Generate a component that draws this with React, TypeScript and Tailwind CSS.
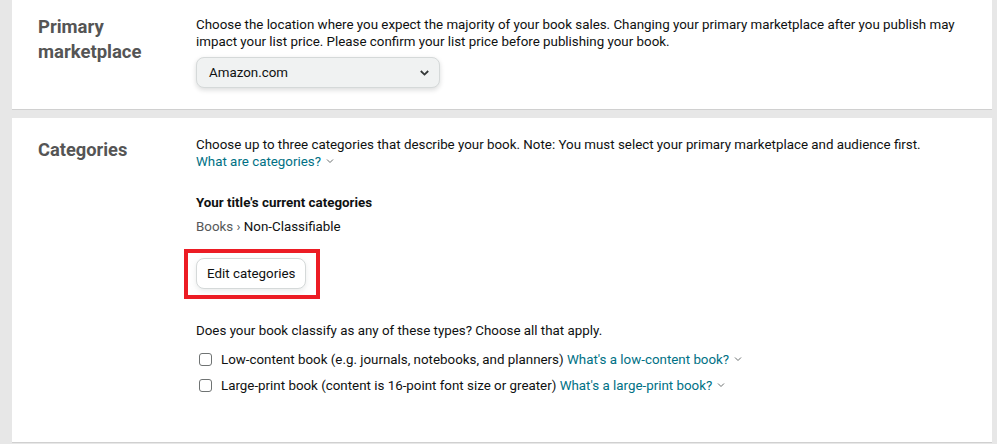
import React from 'react';

const font = { fontFamily: 'Roboto, "Liberation Sans", sans-serif' };

const LinkChevron: React.FC = () => (
    <svg width="8" height="6" viewBox="0 0 8 6" className="inline-block ml-[5px] mb-[2px]">
        <path d="M1 1.5 L4 4.5 L7 1.5" fill="none" stroke="#6b7070" strokeWidth="1" />
    </svg>
);

const HelpLink: React.FC<{ children: React.ReactNode }> = ({ children }) => (
    <a href="#" className="text-[#007185] no-underline">
        {children}
        <LinkChevron />
    </a>
);

const Checkbox: React.FC<{ label: string; help: string }> = ({ label, help }) => (
    <label className="flex items-center h-[26px]">
        <span className="w-[13px] h-[13px] ml-[3px] mr-[9px] rounded-[3px] border border-[#6f7373] bg-white shrink-0" />
        <span>
            {label} <HelpLink>{help}</HelpLink>
        </span>
    </label>
);

export default function App() {
    return (
        <div className="min-h-screen bg-[#e7e7e7] pl-3 pr-[5px] text-[13.35px] leading-[17px] text-[#0f1111]" style={font}>
            {/* Primary marketplace */}
            <section className="flex h-[110px] bg-white border-b border-[#d0d0d0]">
                <div className="w-[184px] shrink-0 pl-[26px] pt-[15px]">
                    <h2 className="text-[18.5px] leading-[25px] font-bold text-[#555555]">
                        Primary
                        <br />
                        marketplace
                    </h2>
                </div>
                <div className="flex-1 pt-[16px] pr-[30px]">
                    <p>
                        Choose the location where you expect the majority of your book sales. Changing your primary
                        marketplace after you publish may impact your list price. Please confirm your list price before
                        publishing your book.
                    </p>
                    <div className="mt-[7px] w-[244px] h-[31px] flex items-center justify-between pl-[12px] pr-[9px] rounded-[8px] border border-[#d5d9d9] bg-[#f0f2f2] shadow-[0_2px_5px_rgba(15,17,17,0.15)]">
                        <span>Amazon.com</span>
                        <svg width="11" height="8" viewBox="0 0 11 8">
                            <path d="M1.8 2 L5.5 5.6 L9.2 2" fill="none" stroke="#333737" strokeWidth="1.8" />
                        </svg>
                    </div>
                </div>
            </section>

            {/* Categories */}
            <section className="flex mt-2 h-[325px] bg-white border-b border-[#d0d0d0]">
                <div className="w-[184px] shrink-0 pl-[26px] pt-[19px]">
                    <h2 className="text-[18.3px] leading-[25px] font-bold text-[#555555]">Categories</h2>
                </div>
                <div className="flex-1 pt-[18px] pr-[30px]">
                    <p>
                        Choose up to three categories that describe your book. Note: You must select your primary
                        marketplace and audience first.
                        <br />
                        <HelpLink>What are categories?</HelpLink>
                    </p>
                    <p className="mt-[24px] font-bold">Your title's current categories</p>
                    <p className="mt-[7px]">
                        <span className="text-[#565959]">Books ›</span> Non-Classifiable
                    </p>
                    <div className="relative mt-[23px] w-fit">
                        <button className="h-[31px] px-[10px] rounded-[8px] border border-[#d5d9d9] bg-white shadow-[0_2px_5px_rgba(213,217,217,0.5)]">
                            Edit categories
                        </button>
                        <div className="absolute -left-[12px] -top-[9px] w-[136px] h-[50px] border-[4px] border-[#ec1c24]" />
                    </div>
                    <p className="mt-[33px]">Does your book classify as any of these types? Choose all that apply.</p>
                    <div className="mt-[7px]">
                        <Checkbox
                            label="Low-content book (e.g. journals, notebooks, and planners)"
                            help="What's a low-content book?"
                        />
                        <Checkbox
                            label="Large-print book (content is 16-point font size or greater)"
                            help="What's a large-print book?"
                        />
                    </div>
                </div>
            </section>
        </div>
    );
}
